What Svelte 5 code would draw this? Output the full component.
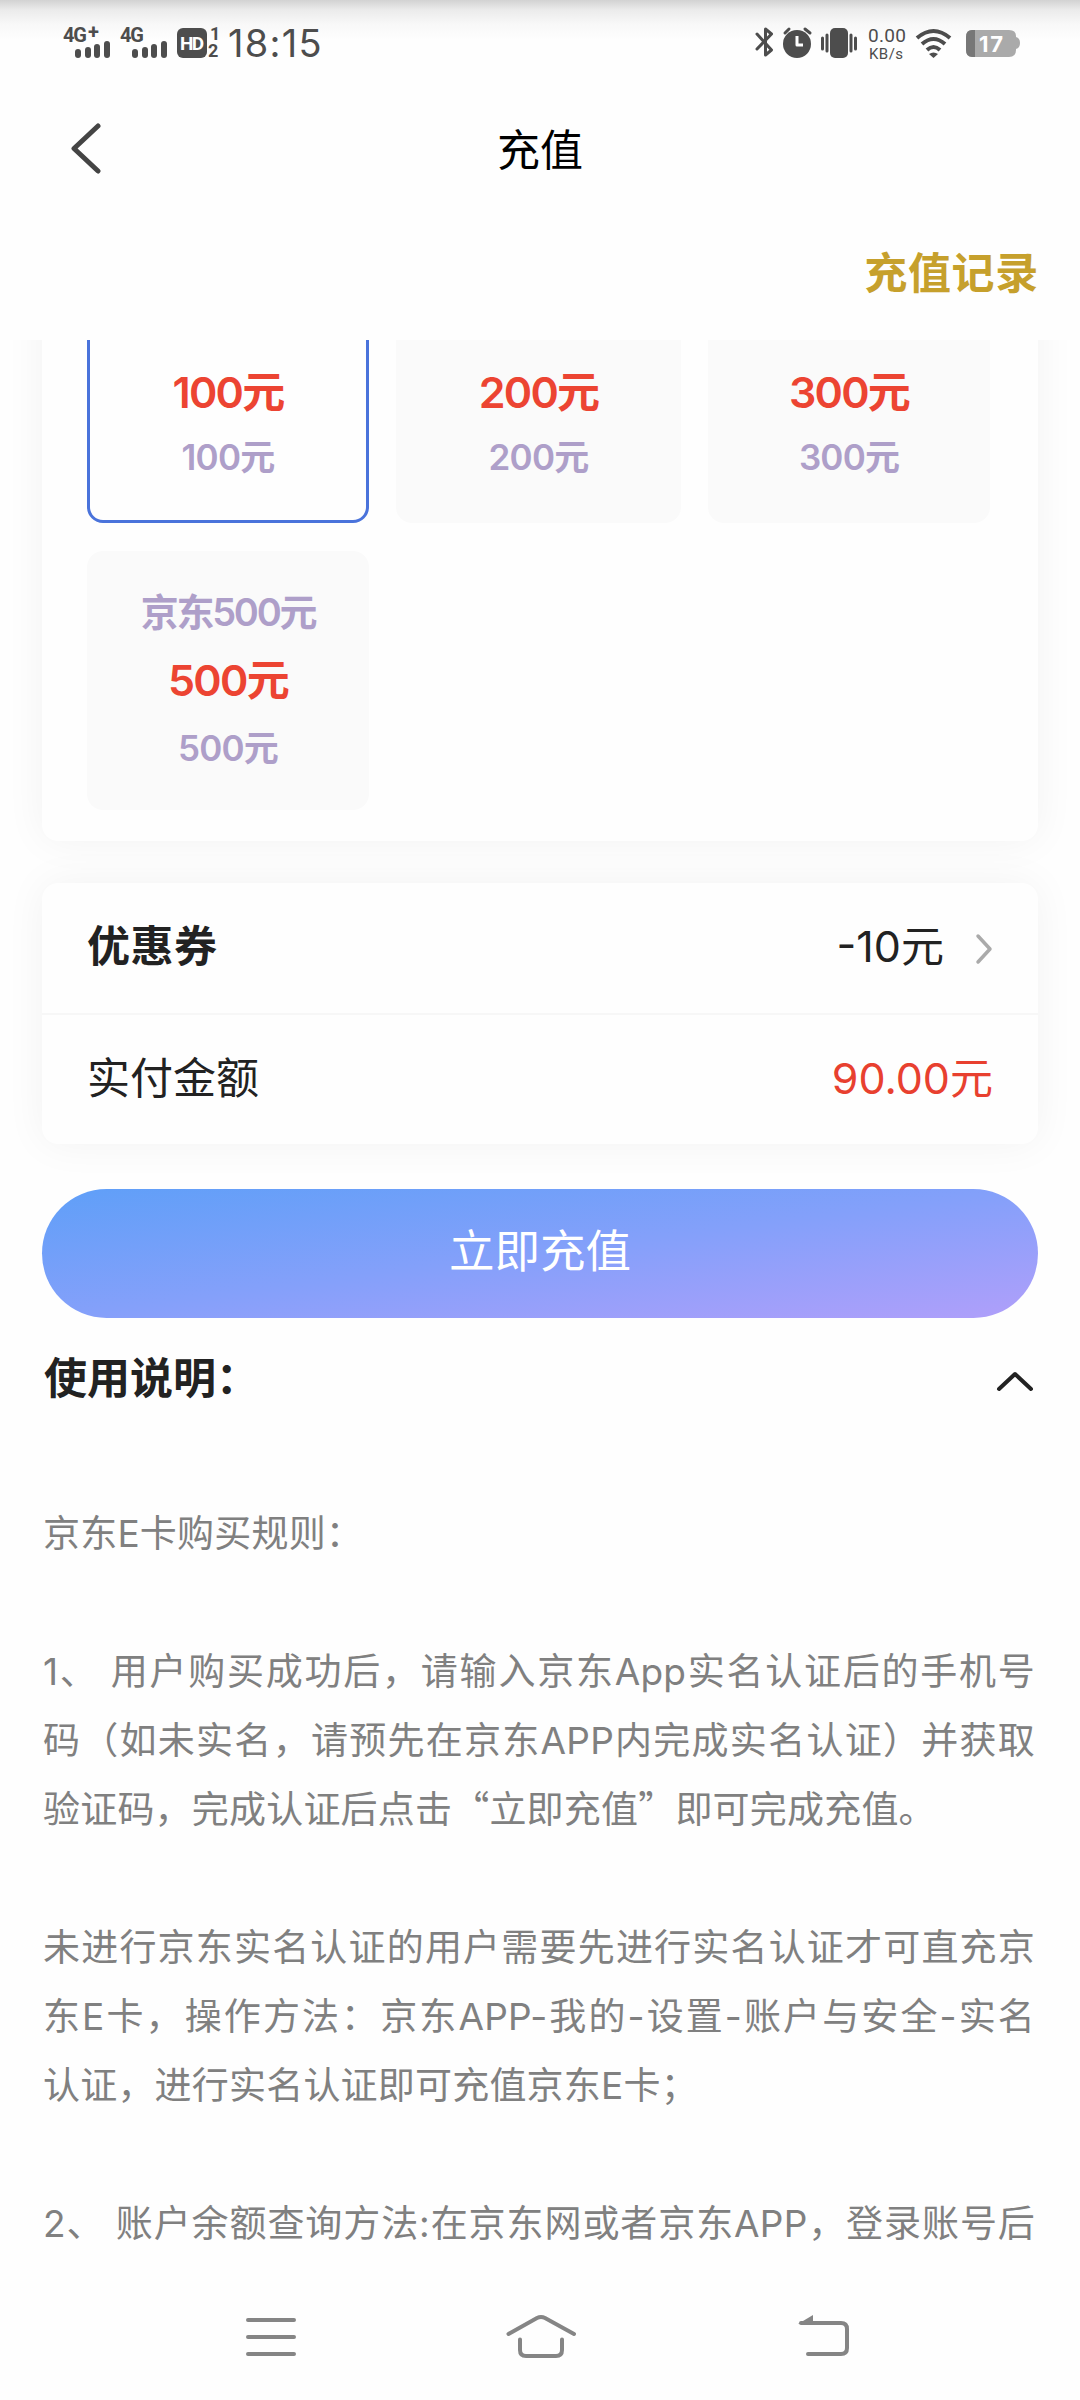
<script lang="ts">
	interface Pack {
		name?: string;
		value: string;
		price: string;
	}

	const packs: Pack[] = [
		{ value: '100元', price: '100元' },
		{ value: '200元', price: '200元' },
		{ value: '300元', price: '300元' },
		{ name: '京东500元', value: '500元', price: '500元' }
	];

	const rules: string[][] = [
		['京东E卡购买规则：'],
		[
			'1、 用户购买成功后，请输入京东App实名认证后的手机号',
			'码（如未实名，请预先在京东APP内完成实名认证）并获取',
			'验证码，完成认证后点击“立即充值”即可完成充值。'
		],
		[
			'未进行京东实名认证的用户需要先进行实名认证才可直充京',
			'东E卡，操作方法：京东APP-我的-设置-账户与安全-实名',
			'认证，进行实名认证即可充值京东E卡；'
		],
		['2、 账户余额查询方法:在京东网或者京东APP，登录账号后', '']
	];

	let selected = $state(0);
	let expanded = $state(true);
</script>

<div class="screen">
	<header class="status">
		<svg class="signals" width="180" height="54" viewBox="0 -10 180 54">
			<g class="net">
				<text x="0" y="17" textLength="24">4G</text>
				<text x="25" y="14" textLength="11">+</text>
				<text x="57" y="17" textLength="24">4G</text>
			</g>
			{#each [12, 69] as x}
				<rect {x} y="24" width="6" height="9" rx="3" />
				<rect x={x + 10} y="22" width="6" height="11" rx="3" />
				<rect x={x + 19} y="19" width="6" height="14" rx="3" />
				<rect x={x + 29} y="16" width="6" height="17" rx="3" />
			{/each}
			<rect x="114" y="3" width="30" height="30" rx="6" />
			<text class="hd" x="117" y="25" textLength="24">HD</text>
			<text class="slot" x="147" y="15">1</text>
			<text class="slot" x="145" y="32" textLength="12">2</text>
		</svg>
		<span class="clock">18:15</span>
		<svg class="indicators" width="270" height="54" viewBox="0 -10 270 54">
			<path class="bt" d="M3 9 17.500 25 11.500 30V4L17.500 9 3 24" />
			<circle cx="43" cy="19" r="14" />
			<path class="alarm" d="M31 8 35 4M51 4 56 8" />
			<path class="hand" d="M43 11V20H49" />
			<rect x="76" y="3" width="18" height="30" rx="5" />
			<path class="shake" d="M68.500 13V24M73 10V26M97 10V26M101.500 13V24" />
			<text class="rate" x="114" y="17" textLength="38">0.00</text>
			<text class="unit" x="115" y="34" textLength="34">KB/s</text>
			<path class="wifi" d="M163 13Q179.500-1 196 13M168 19Q179.500 9 191 19M173 25Q179.500 19 186 25" />
			<path d="M175 29Q179.500 26 184 29L179.500 33Z" />
			<path fill="#aaa" d="M219 5H255Q262 5 262 11V12Q266 13 266 18T262 24V25Q262 32 255 32H219Q212 32 212 25V12Q212 5 219 5Z" />
			<path fill="#777" d="M221 5V32H218Q212 32 212 25V12Q212 5 218 5Z" />
			<text class="level" x="225" y="27" textLength="24">17</text>
		</svg>
	</header>

	<nav class="topbar">
		<button class="back" aria-label="返回">
			<svg width="34" height="54" viewBox="0 0 34 54"><path d="M30 3 6 25.500 30 48" /></svg>
		</button>
		<h1>充值</h1>
	</nav>

	<div class="history"><span>充值记录</span></div>

	<main>
		<section class="card packs">
			{#each packs as pack, i}
				<button
					class="pack"
					class:named={pack.name}
					class:selected={selected === i}
					onclick={() => (selected = i)}
				>
					{#if pack.name}
						<span class="name">{pack.name}</span>
					{/if}
					<span class="value">{pack.value}</span>
					<span class="price">{pack.price}</span>
				</button>
			{/each}
		</section>

		<section class="card bill">
			<div class="row">
				<strong>优惠券</strong>
				<span class="coupon">-10元</span>
				<svg width="18" height="32" viewBox="0 0 18 32"><path d="M3 3 15 16 3 29" /></svg>
			</div>
			<div class="row">
				<span class="label">实付金额</span>
				<span class="amount">90.00元</span>
			</div>
		</section>

		<button class="submit">立即充值</button>

		<button class="guide" onclick={() => (expanded = !expanded)}>
			<strong>使用说明：</strong>
			<svg class:closed={!expanded} width="38" height="22" viewBox="0 0 38 22">
				<path d="M3 19 19 4 35 19" />
			</svg>
		</button>

		{#if expanded}
			<div class="rules">
				{#each rules as lines}
					<p>
						{#each lines as line, i}
							<span class:full={i < lines.length - 1}>
								{#each line.split(/([“”])/) as part}
									{#if part === '“' || part === '”'}<q>{part}</q>{:else}{part}{/if}
								{/each}
							</span>
						{/each}
					</p>
				{/each}
			</div>
		{/if}
	</main>

	<footer>
		<svg width="52" height="46" viewBox="0 0 52 46">
			<path d="M3 6H49M3 23H49M3 40H49" />
		</svg>
		<svg class="home" width="74" height="46" viewBox="0 0 74 46">
			<path d="M4.500 20 33 4Q37 2 41 4L70 20M16 25.500V36Q16 42 22 42H52Q58 42 58 36V25.500" />
		</svg>
		<svg width="54" height="46" viewBox="0 0 54 46">
			<path d="M4 9H44Q50 9 50 15V34Q50 40 44 40H11" />
			<path class="tip" d="M1 10 16 1V10Z" />
		</svg>
	</footer>
</div>

<style>
	:global(body) {
		margin: 0;
		background: #fefefe;
	}

	.screen {
		display: flex;
		flex-direction: column;
		width: 1080px;
		height: 2400px;
		overflow: hidden;
		background: #fefefe;
		color: #222;
		font-family: Inter, 'Noto Sans CJK SC', sans-serif;
	}

	button {
		margin: 0;
		padding: 0;
		border: none;
		background: none;
		color: inherit;
		font: inherit;
	}

	svg {
		flex: none;
		display: block;
	}

	path {
		stroke-linecap: round;
		stroke-linejoin: round;
	}

	.status {
		display: flex;
		align-items: flex-start;
		box-sizing: border-box;
		height: 86px;
		padding: 15px 0 0 63px;
		background: linear-gradient(#d2d2d2 0, #dcdcdc 4px, #ebebeb 10px, #f8f8f8 24px, #fefefe 40px);
	}

	.status svg {
		fill: #4d4d4d;
	}

	.net {
		font: bold 20px Roboto, sans-serif;
	}

	.status .hd {
		fill: #fff;
		font: bold 19px Roboto, sans-serif;
	}

	.slot {
		font: bold 18px Roboto, sans-serif;
	}

	.clock {
		width: 94px;
		margin: 10px 0 0 -15px;
		color: #4d4d4d;
		font: 38px/36px Inter, sans-serif;
		letter-spacing: 1.3px;
		white-space: nowrap;
	}

	.indicators {
		margin-left: 432px;
	}

	.indicators .bt,
	.indicators .alarm,
	.indicators .shake,
	.indicators .wifi,
	.indicators .hand {
		fill: none;
		stroke: #4d4d4d;
		stroke-width: 3;
	}

	.indicators .wifi {
		stroke-width: 4;
		stroke-linecap: butt;
	}

	.indicators .hand {
		stroke: #fff;
		stroke-linecap: butt;
	}

	.rate {
		font: 19px Roboto, sans-serif;
	}

	.unit {
		font: 15px Roboto, sans-serif;
	}

	.status .level {
		fill: #fff;
		font: bold 22px Inter, sans-serif;
	}

	.topbar {
		display: grid;
		grid-template-columns: 110px 1fr 110px;
		align-items: center;
		height: 128px;
	}

	.back {
		padding-left: 68px;
	}

	.back path {
		fill: none;
		stroke: #444;
		stroke-width: 5;
	}

	h1 {
		margin: 0;
		color: #000;
		font-size: 43px;
		font-weight: 400;
		line-height: 60px;
		text-align: center;
	}

	.history {
		height: 126px;
		padding-right: 41px;
		color: #c6a02c;
		font-size: 43px;
		font-weight: 700;
		letter-spacing: 0.7px;
		line-height: 118px;
		text-align: right;
	}

	/* the pack list is scrolled, so its first row starts above the visible area */
	main {
		flex: 1;
		min-height: 0;
		padding: 0 42px;
		overflow: hidden;
	}

	.card {
		border-radius: 16px;
		background: #fefefe;
		box-shadow: 0 0 42px rgba(0, 0, 0, 0.05);
	}

	.packs {
		display: grid;
		grid-template-columns: 282px 285px 282px;
		gap: 28px 27px;
		margin-top: -120px;
		padding: 44px 45px 31px;
	}

	.pack {
		display: flex;
		flex-direction: column;
		align-items: center;
		justify-content: flex-end;
		box-sizing: border-box;
		height: 259px;
		padding: 0 0 33px;
		border-radius: 16px;
		background: #fafafa;
		color: #ae9fc9;
		font-weight: 600;
		letter-spacing: -0.05em;
		line-height: 65px;
	}

	.pack.named {
		padding: 0 0 28px;
		line-height: 68px;
	}

	.pack.selected {
		padding: 0 0 30px;
		border: 3px solid #4a73db;
		background: #fefefe;
	}

	.name {
		font-size: 38px;
		letter-spacing: -0.06em;
	}

	.value {
		color: #ec4432;
		font-size: 43px;
		letter-spacing: -0.04em;
	}

	.price {
		font-size: 35px;
	}

	.bill {
		margin-top: 42px;
	}

	.row {
		display: flex;
		align-items: center;
		box-sizing: border-box;
		height: 130px;
		padding: 0 45px 4px;
		font-size: 43px;
		line-height: 60px;
	}

	.row + .row {
		height: 131px;
		border-top: 2px solid #f7f7f7;
	}

	.row strong {
		letter-spacing: 0.5px;
	}

	.row svg {
		margin-top: 6px;
	}

	.coupon,
	.amount {
		margin-left: auto;
	}

	.coupon {
		margin-right: 31px;
	}

	.amount {
		color: #e8402f;
	}

	.row path {
		fill: none;
		stroke: #aaa;
		stroke-width: 3.5;
	}

	.submit {
		width: 996px;
		height: 129px;
		margin-top: 45px;
		padding-bottom: 3px;
		border-radius: 65px;
		background: linear-gradient(to bottom right, #5f9ff8, #84a0fa 50%, #b09ffa);
		color: #fff;
		font-size: 45.500px;
		line-height: 122px;
	}

	.guide {
		display: flex;
		align-items: center;
		justify-content: space-between;
		width: 100%;
		height: 124px;
		padding: 0 4px 4px 2px;
		font-size: 43px;
		line-height: 60px;
	}

	.guide path {
		fill: none;
		stroke: #222;
		stroke-width: 4;
	}

	.guide svg {
		margin-top: 5px;
	}

	.guide .closed {
		transform: rotate(180deg);
	}

	.rules {
		padding: 57px 3px 0 1px;
		color: #808080;
		font-size: 37px;
		letter-spacing: 0.2px;
		line-height: 69px;
	}

	.rules p {
		margin: 0 0 69px;
	}

	.rules span {
		display: block;
		height: 69px;
		white-space: nowrap;
	}

	.rules q {
		quotes: none;
		font-family: 'Noto Sans CJK SC', sans-serif;
		line-height: 0;
	}

	.rules .full {
		text-align-last: justify;
		text-justify: inter-character;
	}

	footer {
		display: flex;
		flex: none;
		align-items: center;
		justify-content: space-between;
		box-sizing: border-box;
		height: 126px;
		padding: 0 229px 0 245px;
		background: #fefefe;
	}

	.home {
		margin-right: 12px;
	}

	footer path {
		fill: none;
		stroke: #858585;
		stroke-width: 4;
	}

	footer .tip {
		fill: #858585;
		stroke: none;
	}
</style>
